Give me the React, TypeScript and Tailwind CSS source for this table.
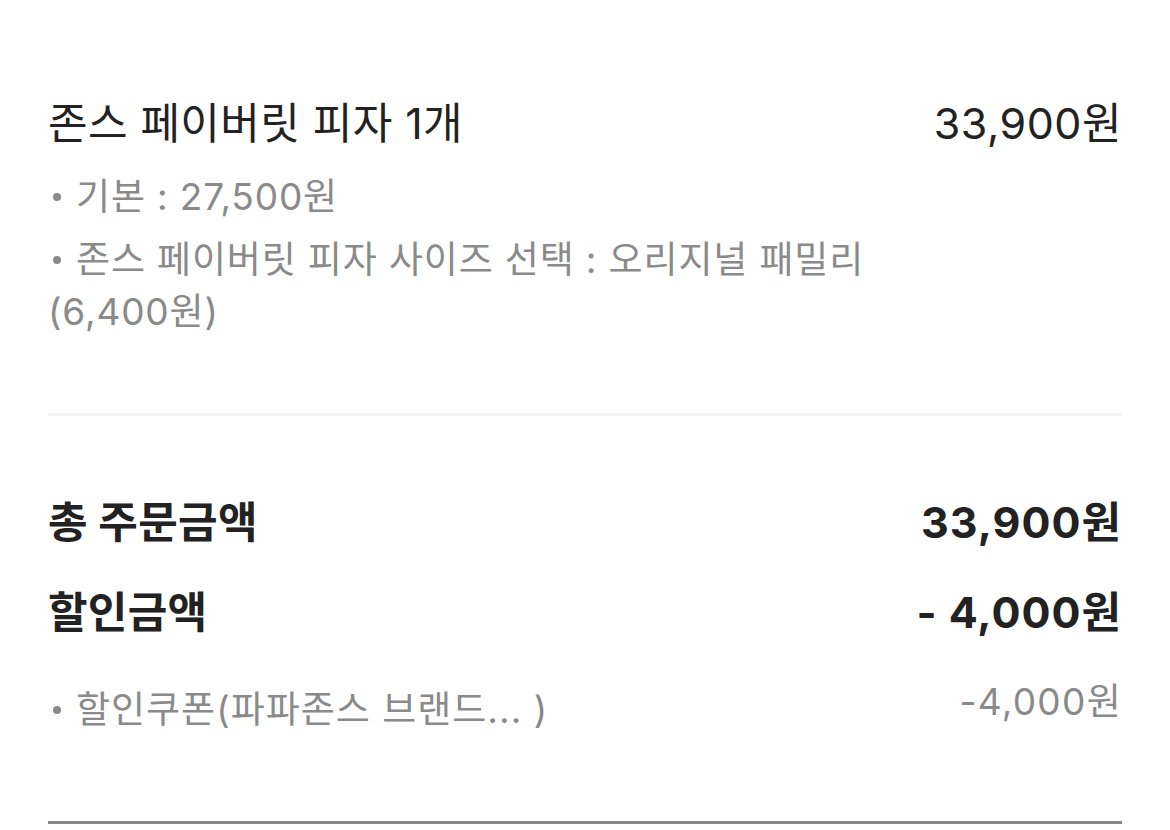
import React from 'react';

type Option = { label: string };

const options: Option[] = [
  { label: '기본 : 27,500원' },
  { label: '존스 페이버릿 피자 사이즈 선택 : 오리지널 패밀리 (6,400원)' },
];

const font = "font-['Inter','Noto_Sans_CJK_KR',sans-serif]";

const Bullet = () => (
  <span className="inline-block w-[8px] h-[8px] rounded-full bg-[#8a8a8a] mr-[15px] ml-[5px] align-middle relative -top-[3px]" />
);

export default function App() {
  return (
    <div className={`w-[1170px] h-[830px] bg-white px-12 overflow-hidden ${font}`}>
      {/* order item */}
      <section className="pt-[95px]">
        <div className="flex justify-between items-start">
          <h2 className="text-[43px] leading-[56px] text-[#222] tracking-[0.4px]">존스 페이버릿 피자 1개</h2>
          <span className="text-[43px] leading-[56px] text-[#222] tracking-[0.5px]">33,900원</span>
        </div>
        <ul className="mt-[20px] w-[870px] flex flex-col gap-[11px]">
          {options.map((o) => (
            <li key={o.label} className="text-[37px] leading-[52px] text-[#8a8a8a] tracking-[0.85px]">
              <Bullet />
              {o.label}
            </li>
          ))}
        </ul>
      </section>

      <div className="mt-[75px] h-[3px] bg-[#f4f4f4]" />

      {/* totals */}
      <section className="pt-[78px]">
        <div className="flex justify-between items-center">
          <span className="text-[43px] leading-[56px] font-bold text-[#222] tracking-[0.3px]">총 주문금액</span>
          <span className="text-[43px] leading-[56px] font-bold text-[#222] tracking-[1px]">33,900원</span>
        </div>
        <div className="flex justify-between items-center mt-[34px]">
          <span className="text-[43px] leading-[56px] font-bold text-[#222] tracking-[0.3px]">할인금액</span>
          <span className="text-[43px] leading-[56px] font-bold text-[#222] tracking-[1px]">- 4,000원</span>
        </div>
        <div className="flex justify-between items-start mt-[44px]">
          <span className="text-[37px] leading-[52px] text-[#8a8a8a] tracking-[1px]">
            <Bullet />
            할인쿠폰(파파존스 브랜드... )
          </span>
          <span className="text-[37px] leading-[52px] text-[#8a8a8a] tracking-[1.3px] -mt-[8px]">-4,000원</span>
        </div>
      </section>

      <div className="mt-[85px] h-[3px] bg-[#888]" />
    </div>
  );
}
